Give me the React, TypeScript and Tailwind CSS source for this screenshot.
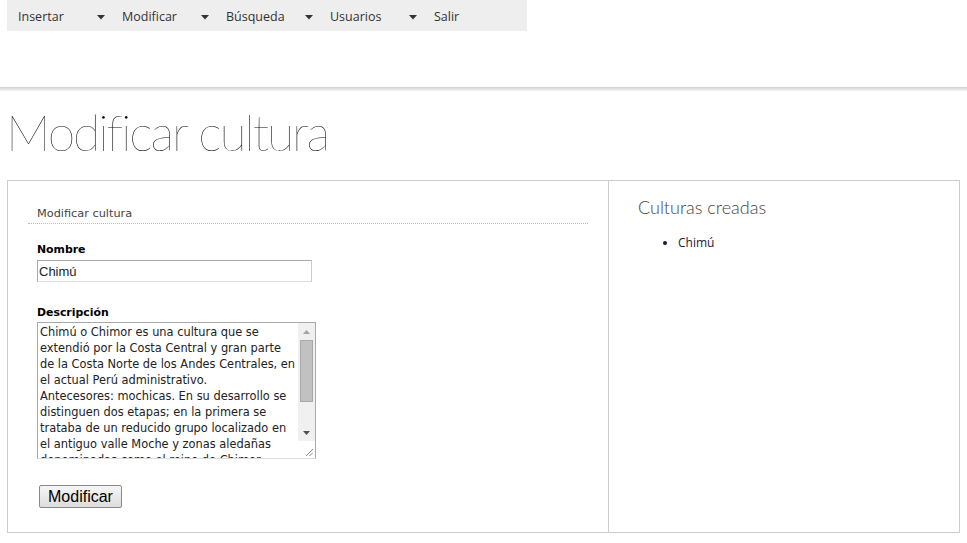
import React from "react";

const navItems = ["Insertar", "Modificar", "Búsqueda", "Usuarios", "Salir"];

const desc =
  "Chimú o Chimor es una cultura que se extendió por la Costa Central y gran parte de la Costa Norte de los Andes Centrales, en el actual Perú administrativo.\nAntecesores: mochicas. En su desarrollo se distinguen dos etapas; en la primera se trataba de un reducido grupo localizado en el antiguo valle Moche y zonas aledañas denominadas como el reino de Chimor, hasta que en la segunda etapa se expandieron.";

function Arrow() {
  return (
    <svg width="8" height="5" viewBox="0 0 8 5" className="block">
      <path d="M0 0 L8 0 L4 4.5 Z" fill="#333" />
    </svg>
  );
}

function FakeScrollbar() {
  return (
    <div className="flex w-[17px] flex-col bg-[#f0f0f0]">
      <div className="flex h-[17px] items-center justify-center">
        <svg width="7" height="4" viewBox="0 0 7 4">
          <path d="M0 4 L7 4 L3.5 0 Z" fill="#a3a3a3" />
        </svg>
      </div>
      <div className="mx-[2px] h-[62px] border border-[#a8a8a8] bg-[#c1c1c1]" />
      <div className="flex-1" />
      <div className="flex h-[17px] items-center justify-center">
        <svg width="7" height="4" viewBox="0 0 7 4">
          <path d="M0 0 L7 0 L3.5 4 Z" fill="#505050" />
        </svg>
      </div>
      <div className="flex h-[17px] items-end justify-end bg-white p-[2px]">
        <svg width="8" height="8" viewBox="0 0 8 8">
          <path d="M1 8 L8 1 M4.5 8 L8 4.5" stroke="#888" strokeWidth="1" />
        </svg>
      </div>
    </div>
  );
}

export default function App() {
  return (
    <div className="min-h-screen bg-white text-[#222]">
      <nav className="ml-[7px] flex h-[31px] w-[520px] bg-[#eeeeee] pt-[3px] font-['Open_Sans',sans-serif] text-[12.5px] text-[#333]">
        {navItems.map((item, i) => (
          <div key={item} className="flex w-[104px] items-center pl-[11px]">
            <span className="w-[79px]">{item}</span>
            {i < navItems.length - 1 && <Arrow />}
          </div>
        ))}
      </nav>
      <div className="mt-[56px] h-[4px] bg-gradient-to-b from-[#cfcfcf] to-[#f6f6f6]" />
      <h1 className="ml-[6px] mt-[14px] h-[75px] font-['Lato',sans-serif] text-[50px] font-extralight leading-[54px] tracking-[-2.1px] text-black">
        Modificar cultura
      </h1>
      <div className="ml-[7px] flex h-[353px] w-[953px] border border-[#cccccc]">
        <div className="w-[601px] border-r border-[#cccccc] pl-[20px] pt-[26px] font-['DejaVu_Sans',sans-serif]">
          <div className="w-[560px] border-b border-dotted border-[#bbbbbb] pb-[2px] pl-[9px] text-[11.3px] leading-[14px] text-[#444]">
            Modificar cultura
          </div>
          <div className="pl-[9px]">
            <div className="mt-[19px] text-[10.9px] font-bold leading-[14px] text-black">Nombre</div>
            <input
              readOnly
              value="Chimú"
              className="mt-[3px] block h-[22px] w-[275px] border border-[#aaaaaa] border-b-[#dddddd] border-r-[#cccccc] px-[1px] font-['Liberation_Sans',sans-serif] text-[13px] text-[#222] outline-none"
            />
            <div className="mt-[24px] text-[10.9px] font-bold leading-[14px] text-black">Descripción</div>
            <div className="mt-[2px] flex h-[137px] w-[279px] border border-[#aaaaaa] border-b-[#dddddd]">
              <textarea
                readOnly
                value={desc}
                className="block h-full flex-1 resize-none overflow-hidden px-[2px] py-[1px] font-['DejaVu_Sans',sans-serif] text-[11.4px] leading-[16px] text-[#222] outline-none"
              />
              <FakeScrollbar />
            </div>
            <button className="ml-[2px] mt-[26px] h-[23px] rounded-[2px] border border-[#888] bg-gradient-to-b from-[#f6f6f6] to-[#dddddd] px-[8px] font-['Liberation_Sans',sans-serif] text-[16px] leading-none text-black">
              Modificar
            </button>
          </div>
        </div>
        <div className="flex-1 pl-[29px] pt-[14px]">
          <h2 className="font-['Lato',sans-serif] text-[18px] font-light leading-[24px] text-[#444]">Culturas creadas</h2>
          <ul className="ml-[40px] mt-[15px] list-disc font-['Open_Sans',sans-serif] text-[12px] leading-[18px] text-[#1a1a3a]">
            <li>Chimú</li>
          </ul>
        </div>
      </div>
    </div>
  );
}
